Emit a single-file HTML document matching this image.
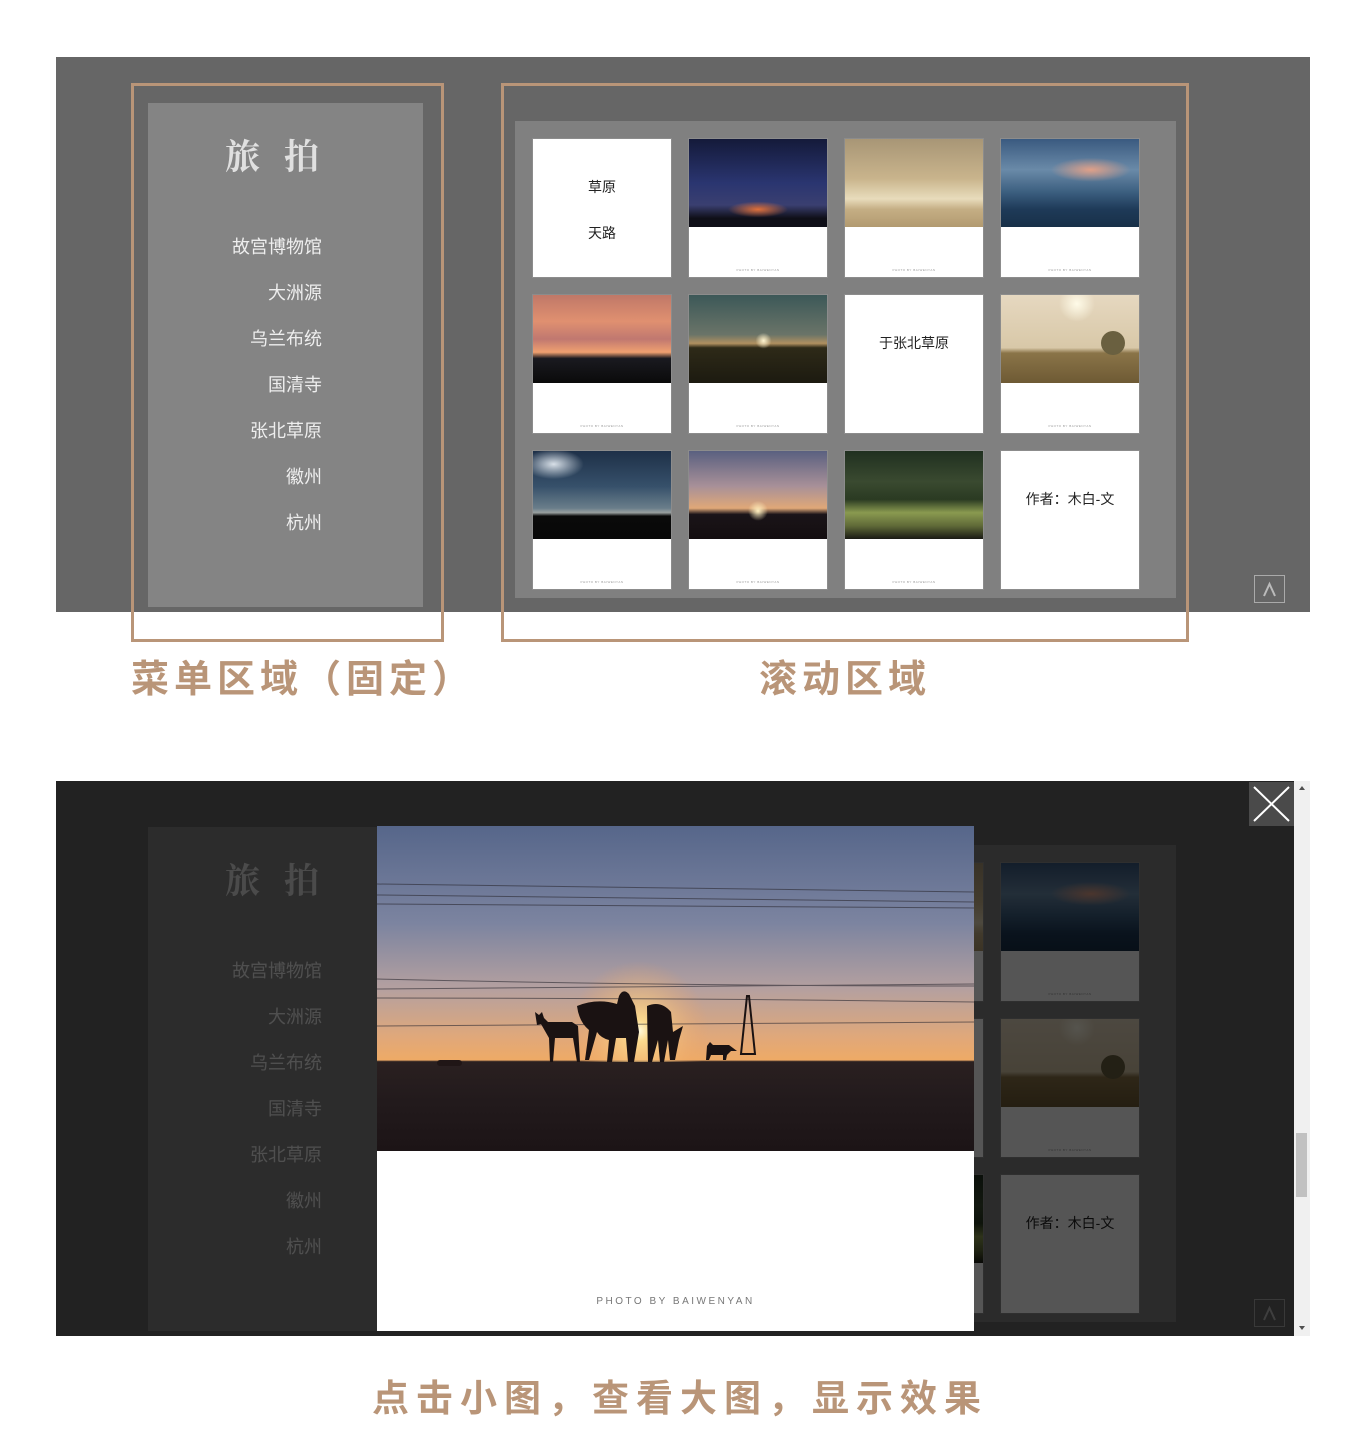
<!DOCTYPE html>
<html><head><meta charset="utf-8">
<style>
*{margin:0;padding:0;box-sizing:border-box}
body{width:1366px;height:1447px;background:#fff;position:relative;overflow:hidden;font-family:"Liberation Sans","Noto Sans CJK SC",sans-serif}
.scene{position:absolute;background:#666;overflow:hidden}
.menu{position:absolute;left:92px;top:46px;width:275px;height:504px;background:#848484}
.menu h1{position:absolute;left:0;width:250px;top:27px;text-align:center;font:bold 35px "Noto Serif CJK SC","Liberation Serif",serif;color:#e0e0e0;letter-spacing:24px;padding-left:22px}
.menu ul{list-style:none;position:absolute;right:101px;top:131px;text-align:right}
.menu li{font-size:18px;color:#eee;height:46px;line-height:26px}
.panel{position:absolute;left:459px;top:64px;width:661px;height:477px;background:#808080}
.t{position:absolute;width:138px;height:138px;background:#fff;box-shadow:0 0 0 1px #8c8c8c}
.ph{height:88px;overflow:hidden}
.cr{position:absolute;left:0;right:0;bottom:5px;text-align:center;font-size:3px;color:#999;letter-spacing:.5px}
.tx{position:absolute;left:0;right:0;text-align:center;font-size:14px;color:#222}
.topbtn{position:absolute;width:31px;height:28px;border:1px solid #aaa}
.frame{position:absolute;border:3px solid #b99578}
.lbl{position:absolute;font-size:38px;font-weight:bold;color:#b99578;letter-spacing:5px;white-space:nowrap;line-height:44px}
</style></head><body>

<div class="scene" style="left:56px;top:57px;width:1254px;height:555px">
  <div class="menu"><h1>旅拍</h1>
    <ul><li>故宫博物馆</li><li>大洲源</li><li>乌兰布统</li><li>国清寺</li><li>张北草原</li><li>徽州</li><li>杭州</li></ul></div>
  <div class="panel">
    <div class="t" style="left:18px;top:18px"><div class="tx" style="top:38px">草原</div><div class="tx" style="top:84px">天路</div></div>
    <div class="t" style="left:174px;top:18px"><div class="ph" style="background:radial-gradient(ellipse 30px 8px at 50% 80%,#e0703a,rgba(200,80,40,0) ),linear-gradient(#141a3a,#2a3570 50%,#3a3f70 75%,#0f0f18 90%)"></div><div class="cr">PHOTO BY BAIWENYAN</div></div>
    <div class="t" style="left:330px;top:18px"><div class="ph" style="background:linear-gradient(#a89676,#c9b48c 45%,#e8dcbc 68%,#c4ae84 80%,#b29a70)"></div><div class="cr">PHOTO BY BAIWENYAN</div></div>
    <div class="t" style="left:486px;top:18px"><div class="ph" style="background:radial-gradient(ellipse 40px 12px at 65% 35%,#e0a088,rgba(220,150,130,0)),linear-gradient(#3a5a80,#6a8aa8 35%,#3c5f80 60%,#1e3a58 80%,#183048)"></div><div class="cr">PHOTO BY BAIWENYAN</div></div>

    <div class="t" style="left:18px;top:174px"><div class="ph" style="background:linear-gradient(#c07868,#e09070 30%,#c07870 50%,#f0a070 65%,#1a1a20 72%,#0a0a0a)"></div><div class="cr">PHOTO BY BAIWENYAN</div></div>
    <div class="t" style="left:174px;top:174px"><div class="ph" style="background:radial-gradient(circle 8px at 54% 52%,#fff5d0,rgba(255,220,150,0)),linear-gradient(#3c5858,#6a7468 45%,#b09060 55%,#2e2a18 60%,#1c1a10)"></div><div class="cr">PHOTO BY BAIWENYAN</div></div>
    <div class="t" style="left:330px;top:174px"><div class="tx" style="top:38px">于张北草原</div></div>
    <div class="t" style="left:486px;top:174px"><div class="ph" style="position:relative;background:radial-gradient(circle 18px at 55% 10%,#fffbe8,rgba(255,240,200,0)),linear-gradient(#e6d8c0,#d8c8a8 60%,#8a7448 66%,#6e5a34)"><div style="position:absolute;left:100px;top:36px;width:24px;height:24px;border-radius:50%;background:#6a6040"></div></div><div class="cr">PHOTO BY BAIWENYAN</div></div>

    <div class="t" style="left:18px;top:330px"><div class="ph" style="background:radial-gradient(ellipse 30px 15px at 15% 15%,#d8e0e8,rgba(200,210,220,0)),linear-gradient(#1e3048,#36506a 40%,#6a7e8a 65%,#9aa0a0 70%,#0a0a0a 74%,#080808)"></div><div class="cr">PHOTO BY BAIWENYAN</div></div>
    <div class="t" style="left:174px;top:330px"><div class="ph" style="background:radial-gradient(circle 10px at 50% 68%,#fff0c0,rgba(255,200,120,0)),linear-gradient(#5a6080,#a89098 40%,#e0a878 65%,#1a1418 72%,#140e10)"></div><div class="cr">PHOTO BY BAIWENYAN</div></div>
    <div class="t" style="left:330px;top:330px"><div class="ph" style="background:linear-gradient(#203020,#3a4a30 35%,#2a3a22 55%,#8a9a50 70%,#606a38 85%,#1a1a14)"></div><div class="cr">PHOTO BY BAIWENYAN</div></div>
    <div class="t" style="left:486px;top:330px"><div class="tx" style="top:38px">作者：木白-文</div></div>
  </div>
  <div class="topbtn" style="left:1198px;top:518px"><svg width="29" height="26"><path d="M9 20 L14.5 8 L20 20" stroke="#bbb" stroke-width="2" fill="none"/></svg></div>
</div>

<div class="frame" style="left:131px;top:83px;width:313px;height:559px"></div>
<div class="frame" style="left:501px;top:83px;width:688px;height:559px"></div>
<div class="lbl" style="left:131px;top:658px">菜单区域（固定）</div>
<div class="lbl" style="left:759px;top:658px">滚动区域</div>

<div class="scene" style="left:56px;top:781px;width:1238px;height:555px">
  <div class="menu"><h1>旅拍</h1>
    <ul><li>故宫博物馆</li><li>大洲源</li><li>乌兰布统</li><li>国清寺</li><li>张北草原</li><li>徽州</li><li>杭州</li></ul></div>
  <div class="panel">
    <div class="t" style="left:330px;top:18px"><div class="ph" style="background:linear-gradient(#a89676,#c9b48c 45%,#e8dcbc 68%,#c4ae84 80%,#b29a70)"></div></div>
    <div class="t" style="left:486px;top:18px"><div class="ph" style="background:radial-gradient(ellipse 40px 12px at 65% 35%,#e0a088,rgba(220,150,130,0)),linear-gradient(#3a5a80,#6a8aa8 35%,#3c5f80 60%,#1e3a58 80%,#183048)"></div><div class="cr">PHOTO BY BAIWENYAN</div></div>
    <div class="t" style="left:330px;top:174px"><div class="ph" style="background:#fff"></div></div>
    <div class="t" style="left:486px;top:174px"><div class="ph" style="position:relative;background:radial-gradient(circle 18px at 55% 10%,#fffbe8,rgba(255,240,200,0)),linear-gradient(#e6d8c0,#d8c8a8 60%,#8a7448 66%,#6e5a34)"><div style="position:absolute;left:100px;top:36px;width:24px;height:24px;border-radius:50%;background:#6a6040"></div></div><div class="cr">PHOTO BY BAIWENYAN</div></div>
    <div class="t" style="left:330px;top:330px"><div class="ph" style="background:linear-gradient(#203020,#3a4a30 35%,#2a3a22 55%,#8a9a50 70%,#606a38 85%,#1a1a14)"></div></div>
    <div class="t" style="left:486px;top:330px"><div class="tx" style="top:38px">作者：木白-文</div></div>
  </div>
  <div class="topbtn" style="left:1198px;top:518px"><svg width="29" height="26"><path d="M9 20 L14.5 8 L20 20" stroke="#bbb" stroke-width="2" fill="none"/></svg></div>
  <div style="position:absolute;inset:0;background:rgba(0,0,0,.667)"></div>
</div>

<div style="position:absolute;left:377px;top:826px;width:597px;height:505px;background:#fff">
  <svg width="597" height="325" viewBox="0 0 597 325" style="display:block">
    <defs>
      <linearGradient id="sky" x1="0" y1="0" x2="0" y2="1">
        <stop offset="0" stop-color="#56668a"/><stop offset=".3" stop-color="#7c84a0"/>
        <stop offset=".5" stop-color="#b4a0a0"/><stop offset=".65" stop-color="#e0a87a"/>
        <stop offset=".72" stop-color="#eeaa66"/>
        <stop offset=".725" stop-color="#2a2020"/><stop offset=".85" stop-color="#221a1c"/><stop offset="1" stop-color="#1c1416"/>
      </linearGradient>
      <radialGradient id="sun" cx="262" cy="205" r="70" gradientUnits="userSpaceOnUse">
        <stop offset="0" stop-color="#fffbe0"/><stop offset=".15" stop-color="#ffe090" stop-opacity=".9"/><stop offset="1" stop-color="#f0a060" stop-opacity="0"/>
      </radialGradient>
    </defs>
    <rect width="597" height="325" fill="url(#sky)"/>
    <rect width="597" height="236" fill="url(#sun)"/>
    <g stroke="#2a2830" stroke-width="1" fill="none" opacity=".6">
      <path d="M0 58 L597 66"/><path d="M0 69 Q300 72 597 76"/><path d="M0 78 L597 82"/>
      <path d="M0 153 Q300 160 597 160"/><path d="M0 163 Q300 160 597 158"/><path d="M0 172 Q300 172 597 176"/>
      <path d="M0 200 L597 196"/>
    </g>
    <g fill="#1a1212">
      <path d="M158 186 l4 3 l3 -3 l2 6 l4 4 h24 l6 4 l2 36 h-3 l-4 -24 h-18 l-2 24 h-3 l-1 -24 l-8 -14 l-4 1z"/>
      <path d="M200 180 q20 -8 40 -2 l2 -8 q4 -8 10 -2 l6 12 l4 26 l-5 30 h-6 l-2 -24 h-10 l-4 24 h-5 l2 -22 q-8 -2 -12 -8 l-8 28 h-4 l4 -30 q-10 -8 -12 -24z"/>
      <path d="M270 180 q14 -6 24 6 l2 20 l10 -6 l-4 14 l-4 20 h-5 l-2 -20 l-4 22 h-4 l-2 -22 l-6 22 h-4z"/>
      <path d="M330 220 l3 -4 l3 3 h16 l8 6 h-6 l-4 4 l-1 5 h-3 v-5 h-12 l-2 5 h-3z"/>
      <path d="M364 228 l6 -58 h2 l6 58z" fill="none" stroke="#1a1212" stroke-width="2"/>
      <rect x="60" y="234" width="25" height="6" rx="3" fill="#201616"/>
    </g>
  </svg>
  <div style="position:absolute;left:0;right:0;top:470px;text-align:center;font-size:10px;letter-spacing:2.5px;color:#777">PHOTO BY BAIWENYAN</div>
</div>

<div style="position:absolute;left:1249px;top:782px;width:45px;height:44px;background:#4a4a4a">
  <svg width="45" height="44"><path d="M5 5 L40 39 M40 5 L5 39" stroke="#fff" stroke-width="2"/></svg>
</div>
<div style="position:absolute;left:1294px;top:781px;width:16px;height:555px;background:#f0f0f0">
  <div style="position:absolute;left:5px;top:5px;border:3px solid transparent;border-bottom:4px solid #505050;border-top:0"></div>
  <div style="position:absolute;left:2px;top:352px;width:11px;height:64px;background:#c1c1c1"></div>
  <div style="position:absolute;left:5px;bottom:6px;border:3px solid transparent;border-top:4px solid #505050;border-bottom:0"></div>
</div>

<div class="lbl" style="left:372px;top:1377px;font-size:37px;letter-spacing:7px">点击小图，查看大图，显示效果</div>
</body></html>
